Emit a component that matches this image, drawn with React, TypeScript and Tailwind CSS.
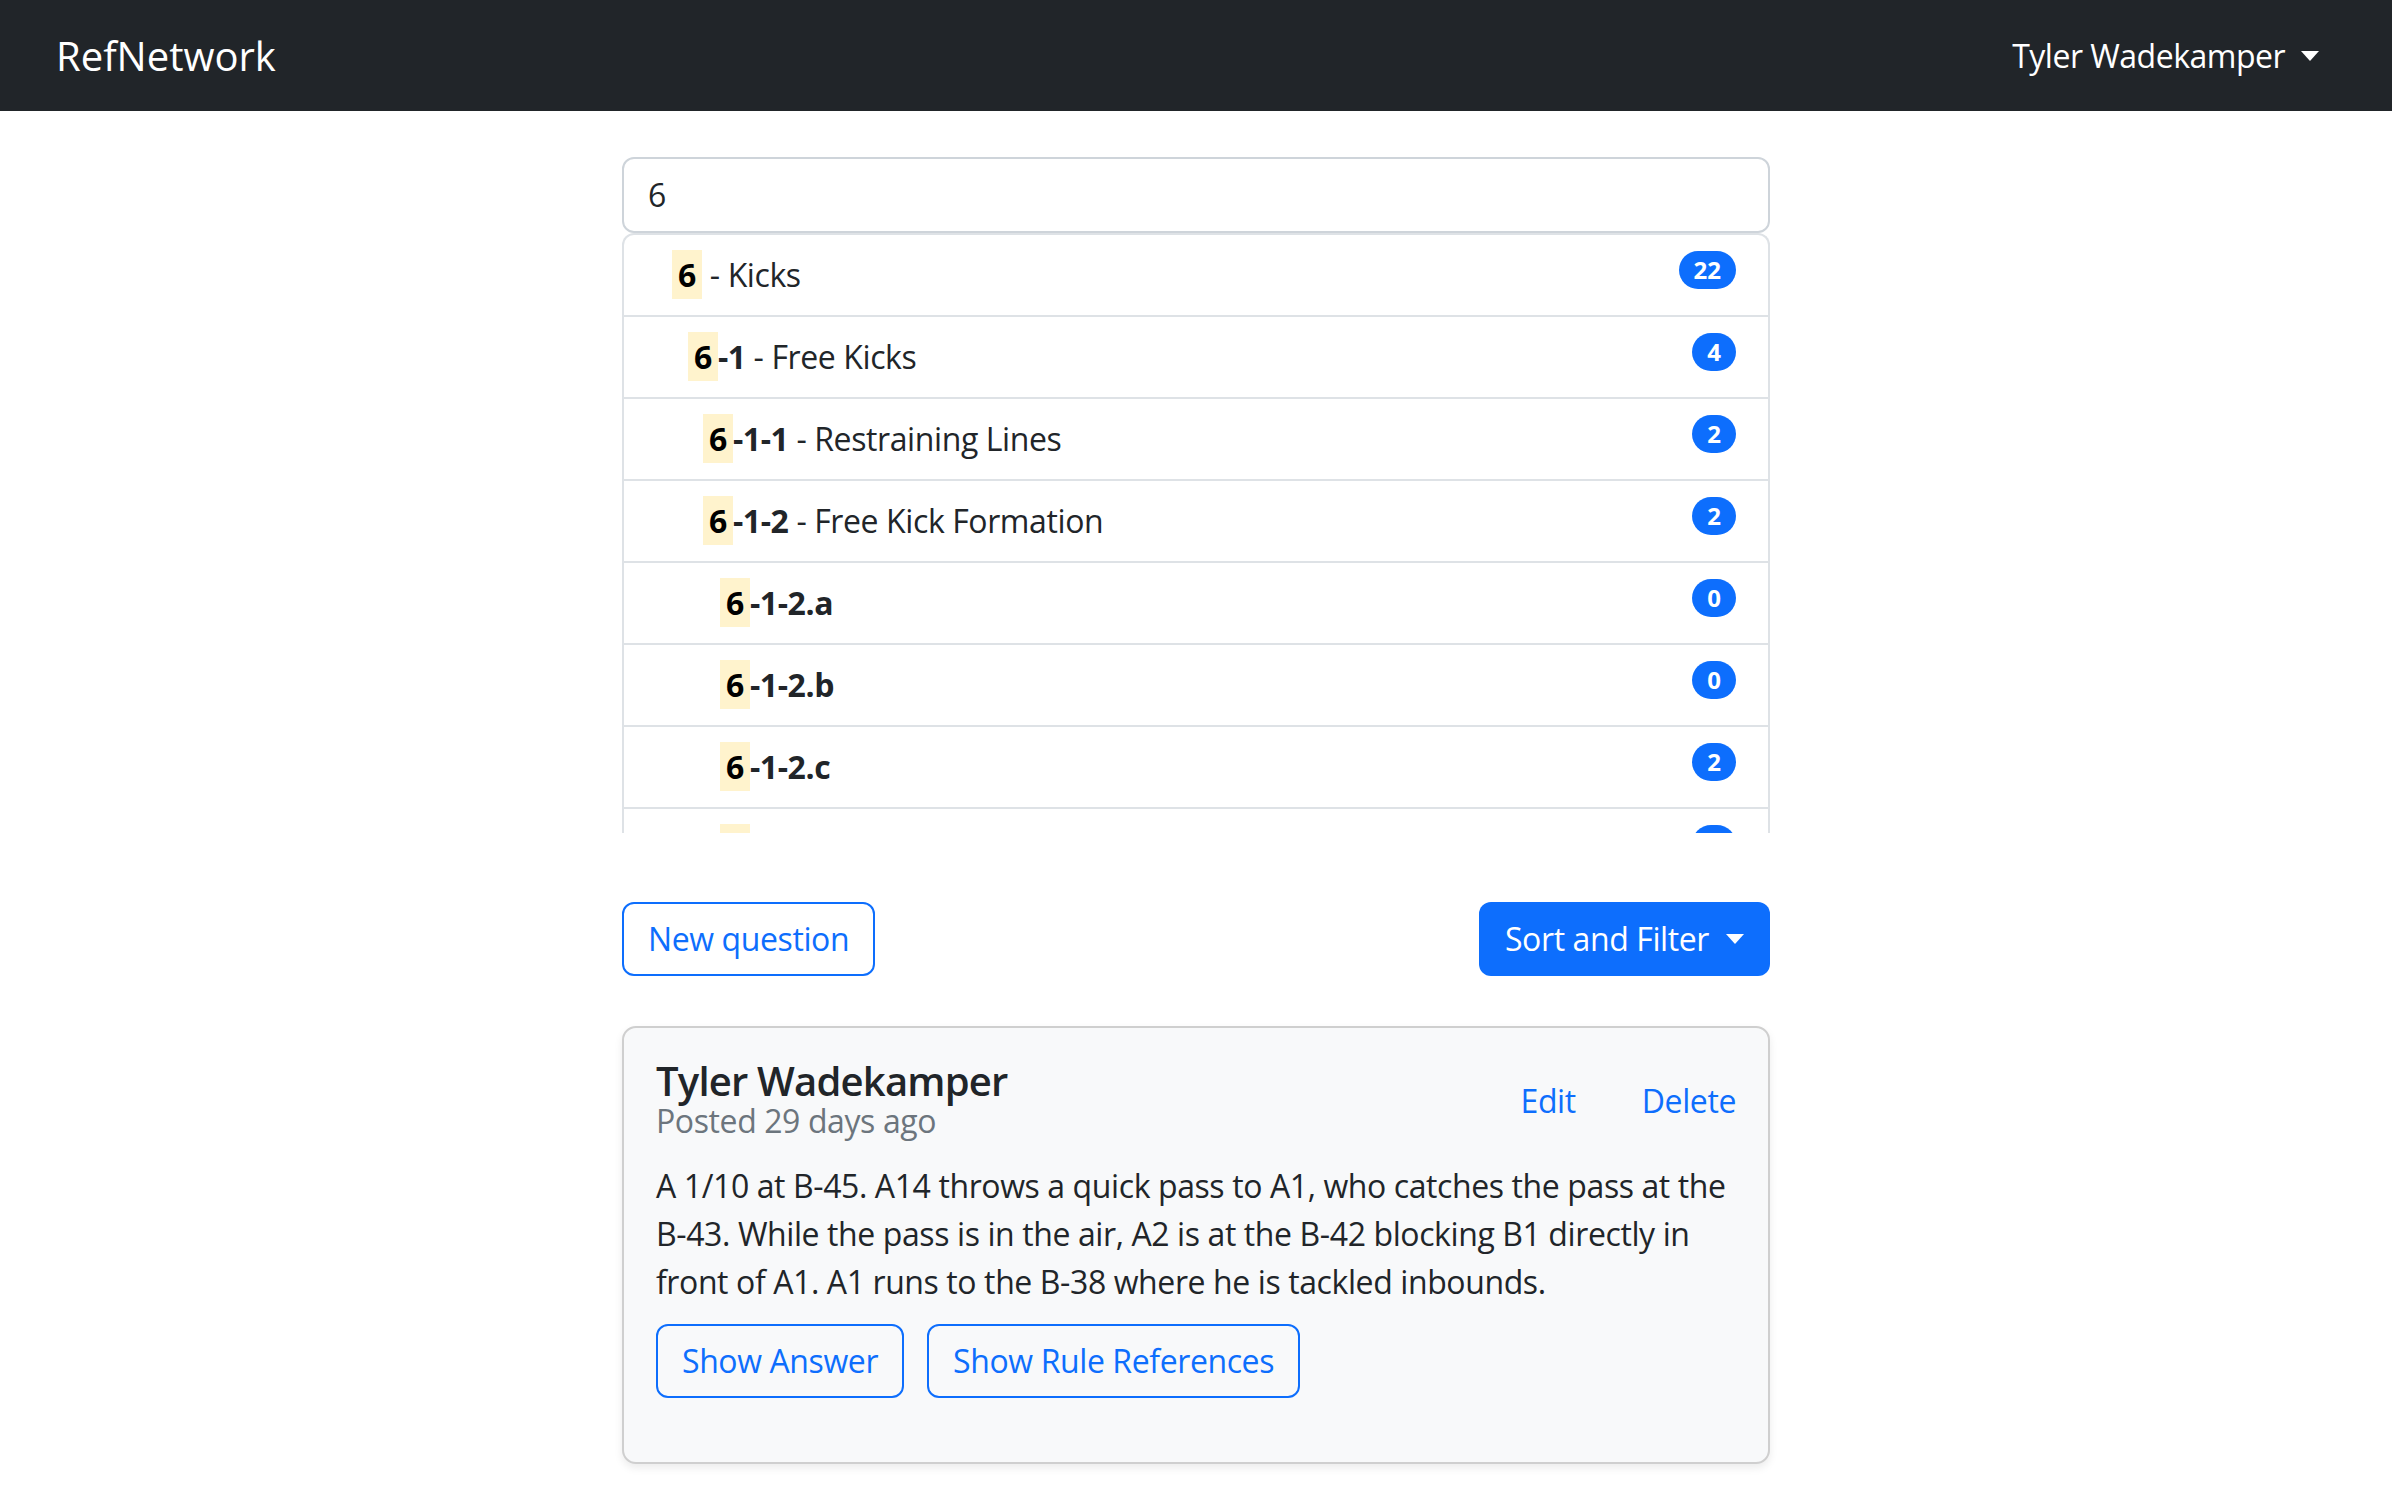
import React from 'react';

type Row = { level: number; code: string; title?: string; count: number };

const rows: Row[] = [
  { level: 1, code: '', title: 'Kicks', count: 22 },
  { level: 2, code: '-1', title: 'Free Kicks', count: 4 },
  { level: 3, code: '-1-1', title: 'Restraining Lines', count: 2 },
  { level: 3, code: '-1-2', title: 'Free Kick Formation', count: 2 },
  { level: 4, code: '-1-2.a', count: 0 },
  { level: 4, code: '-1-2.b', count: 0 },
  { level: 4, code: '-1-2.c', count: 2 },
  { level: 4, code: '-1-2.d', count: 0 },
];

const indent: Record<number, string> = {
  1: 'pl-[48px]',
  2: 'pl-[64px]',
  3: 'pl-[79px]',
  4: 'pl-[96px]',
};

const Caret = ({ color }: { color: string }) => (
  <span
    className={`inline-block w-0 h-0 border-x-[9px] border-x-transparent border-t-[10px] ${color}`}
  />
);

const RuleRow = ({ row }: { row: Row }) => (
  <li className="flex items-start justify-between border-b-2 border-[#dee2e6] pr-[32px] py-[16px]">
    <div className={`${indent[row.level]} text-[32px] leading-[48px] text-[#212529]`}>
      <b className="font-bold">
        <mark className="bg-[#fff3cd] text-black px-[6px] py-[3px]">6</mark>
        {row.code}
      </b>
      {row.title && <span> - {row.title}</span>}
    </div>
    <span className="rounded-full bg-[#0d6efd] text-white text-[24px] font-bold leading-none px-[15px] py-[7px] tracking-normal">
      {row.count}
    </span>
  </li>
);

const outlineBtn =
  'border-2 border-[#0d6efd] text-[#0d6efd] rounded-[12px] px-[24px] py-[11px] text-[32px] leading-[48px]';

export default function App() {
  return (
    <div className="min-h-screen bg-white font-['Open_Sans',sans-serif] text-[#212529] tracking-[-0.4px]">
      {/* navbar */}
      <nav className="h-[111px] bg-[#212529] flex items-center justify-between pl-[56px] pr-[73px]">
        <span className="text-white text-[40px] leading-none tracking-normal">RefNetwork</span>
        <div className="flex items-center gap-[16px] text-white text-[32px] tracking-[-0.5px]">
          <span>Tyler Wadekamper</span>
          <Caret color="border-t-white" />
        </div>
      </nav>

      <main className="w-[1148px] mx-auto pt-[46px] pb-[40px]">
        <div className="h-[76px] border-2 border-[#ced4da] rounded-[12px] flex items-center px-[24px] text-[32px]">
          6
        </div>

        <div className="max-h-[600px] overflow-hidden">
          <ul className="border-2 border-b-0 border-[#dee2e6] rounded-t-[12px]">
            {rows.map((r, i) => (
              <RuleRow key={i} row={r} />
            ))}
          </ul>
        </div>

        <div className="flex justify-between items-center mt-[69px]">
          <button className={outlineBtn}>New question</button>
          <button className="flex items-center gap-[17px] bg-[#0d6efd] text-white rounded-[12px] pl-[26px] pr-[26px] py-[13px] text-[32px] leading-[48px]">
            Sort and Filter
            <Caret color="border-t-white" />
          </button>
        </div>

        <div className="mt-[50px] border-2 border-[#cfcfcf] rounded-[14px] bg-[#f8f9fa] shadow-[0_4px_8px_rgba(0,0,0,0.08)] px-[32px] pt-[32px] pb-[64px]">
          <div className="flex justify-between items-start">
            <div>
              <h5 className="text-[40px] leading-[42px] font-semibold text-[#212529] tracking-[-0.8px]">
                Tyler Wadekamper
              </h5>
              <div className="text-[32px] leading-[38px] text-[#6c757d]">Posted 29 days ago</div>
            </div>
            <div className="flex gap-[66px] mt-[17px] text-[32px] leading-[48px] text-[#0d6efd]">
              <span>Edit</span>
              <span>Delete</span>
            </div>
          </div>
          <p className="mt-[22px] text-[32px] leading-[48px]">
            A 1/10 at B-45. A14 throws a quick pass to A1, who catches the pass at the B-43. While the pass is in the
            air, A2 is at the B-42 blocking B1 directly in front of A1. A1 runs to the B-38 where he is tackled
            inbounds.
          </p>
          <div className="flex gap-[23px] mt-[18px]">
            <button className={outlineBtn}>Show Answer</button>
            <button className={outlineBtn}>Show Rule References</button>
          </div>
        </div>
      </main>
    </div>
  );
}
